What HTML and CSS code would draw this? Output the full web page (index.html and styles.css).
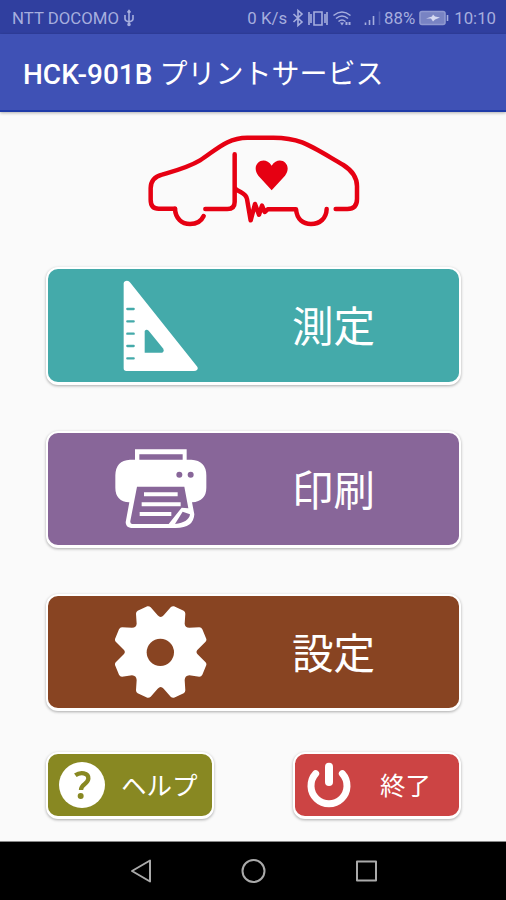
FILE: index.html
```html
<!DOCTYPE html>
<html lang="ja">
<head>
  <meta charset="UTF-8" />
  <meta name="viewport" content="width=device-width, initial-scale=1.0" />
  <title>HCK-901B プリントサービス</title>
  <link rel="stylesheet" href="styles.css">
</head>
<body>
  <div class="status-bar">
    <span class="carrier">NTT DOCOMO</span>
    <svg class="usb" viewBox="0 0 12 18" width="12" height="18">
      <path d="M6 2v14M2 6v4q0 2 4 3M10 6v4q0 2-4 3M4.500 3.500L6 1.500l1.500 2" />
      <circle cx="6" cy="15.500" r="1" />
    </svg>
    <span class="speed">0 K/s</span>
    <svg class="status-icons" viewBox="0 0 91 20" width="91" height="20">
      <path d="M1.500 6l8.500 8-4 3.500V2.500l4 3.500-8.500 8" />
      <path d="M22 4h8v13h-8zM19 6v9M33 6v9M17 4v13M35 4v13" />
      <path d="M41.500 7.500q8.500-7 17 0M44 10.500q6-5 12 0M46.500 13.500q3.500-3 7 0" />
      <path class="solid" d="M48 14.500l2 3 2-3zM53.500 14h2v3h-2zM56.500 14h2v3h-2z" />
      <path d="M73.500 14.500v2.500M77.500 12V17M81.500 8v9" />
      <path class="dim" d="M87.500 3.500V17" />
    </svg>
    <span class="percent">88%</span>
    <svg class="battery" viewBox="0 0 30 16" width="30" height="16">
      <rect class="cell" x="1" y="1.500" width="25" height="13" rx="2" />
      <path d="M28.500 5v6" />
      <path class="bolt" d="M7 8.500l6-2 1-2 2 2 5 1-5 2-2 2-2-3z" />
    </svg>
    <span class="clock">10:10</span>
  </div>

  <header class="toolbar">
    <h1><span class="model">HCK-901B</span>プリントサービス</h1>
  </header>

  <main>
    <!-- Car logo -->
    <svg class="logo" viewBox="0 0 690 330" width="230" height="110">
      <path d="M105 251H56Q32 251 32 224V190Q32 158 66 149C110 136 145 127 180 106C226 77 260 38 322 38H400C482 38 510 62 610 120Q651 146 651 184V222Q651 252 622 252H587" />
      <path d="M105 251C106 281 126 297 150 297Q180 297 191 273" />
      <path d="M196 252H262Q284 252 284 231V88" />
      <path d="M286 191C302 204 318 204 321 222L332 286L345 237L357 269L366 242L374 261L383 253H468C471 284 490 297 513 297C540 297 559 280 560 252" />
      <path class="heart" d="M395 196L355 152C329 117 373 88 395 122C417 88 461 117 435 152Z" />
    </svg>

    <div class="menu">
      <button class="btn measure">
        <svg viewBox="225 60 276 276" width="92" height="92">
          <path class="fill" d="M251 70Q252 62 261 62Q267 62 271 68L470 318Q476 325 471 330Q468 333 462 333H259Q251 333 251 325Z" />
          <path class="hole" d="M314 213Q319 206 326 212L370 266Q374 272 367 278H314Z" />
          <path class="ticks" d="M262 147h19M262 184h19M262 221h19M262 258h19M262 295h19" />
        </svg>
        <span>測定</span>
      </button>

      <button class="btn print">
        <svg viewBox="225 54 276 276" width="92" height="92">
          <path class="fill" d="M285 73H440V104H454Q499 107 499 151V188Q499 228 456 232L463 268Q461 309 407 309H273Q257 307 257 292L268 232Q226 229 226 188V151Q227 106 270 104H285Z" />
          <path class="hole" d="M298 88H428V104H298ZM291 185H433L445 250L425 248L386 297H276Q270 296 271 288Z" />
          <path class="hole" d="M428 260L450 268Q447 292 405 297Z" />
          <circle class="hole" cx="418" cy="149" r="9" />
          <circle class="hole" cx="452" cy="149" r="9" />
          <path class="lines" d="M312 208H413M305 238H422M299 267H394" />
        </svg>
        <span>印刷</span>
      </button>

      <button class="btn setup">
        <svg viewBox="225 48 276 276" width="92" height="92">
          <path class="fill" d="M402 49L431 62Q436 65 436 71L434 101Q435 113 448 113L478 112Q484 112 487 118L499 147Q500 152 496 156L472 180Q467 186 472 192L496 216Q500 220 499 225L487 254Q484 260 478 260L448 256Q435 257 434 270L436 301Q436 307 431 310L402 323Q396 324 392 320L371 296Q362 286 353 296L332 320Q328 324 322 323L293 310Q288 307 288 301L290 270Q289 257 276 256L246 260Q240 260 237 254L225 225Q224 220 228 216L252 192Q257 186 252 180L228 156Q224 152 225 147L237 118Q240 112 246 112L276 113Q289 113 290 101L288 71Q288 65 293 62L322 49Q328 48 332 52L353 76Q362 86 371 76L392 52Q396 48 402 49Z" />
          <circle class="hole" cx="361" cy="187" r="41" />
        </svg>
        <span>設定</span>
      </button>

      <div class="row">
        <button class="btn small help">
          <svg viewBox="0 0 138 138" width="46" height="46">
            <circle class="fill" cx="69" cy="69" r="69" />
            <path class="mark" d="M49 40C64 29 89 32 88 50C87 67 66 65 66 84" />
            <circle class="hole" cx="65" cy="102" r="9" />
          </svg>
          <span>ヘルプ</span>
        </button>
        <button class="btn small exit">
          <svg viewBox="0 0 138 138" width="46" height="46">
            <path class="power" d="M29 35A54 54 0 1 0 109 35" />
            <path class="power stem" d="M69 14V60" />
          </svg>
          <span>終了</span>
        </button>
      </div>
    </div>
  </main>

  <nav class="nav-bar">
    <svg viewBox="0 0 24 26" width="24" height="26"><path d="M21 2.500V23.500L3 13Z" /></svg>
    <svg viewBox="0 0 26 26" width="26" height="26"><circle cx="13.500" cy="13" r="11" /></svg>
    <svg viewBox="0 0 24 26" width="24" height="26"><rect x="4" y="3.500" width="19" height="19" /></svg>
  </nav>
</body>
</html>
```

FILE: styles.css
```css
:root {
  --primary: #3f51b5;
  --primary-dark: #303f9f;
  --status-text: #a6aede;
  --page: #fafafa;
  --logo: #e60012;
}
* { box-sizing: border-box; }
html, body {
  margin: 0; padding: 0;
}
body {
  height: 900px;
  display: flex;
  flex-direction: column;
  background: var(--page);
  font-family: Roboto, "Noto Sans CJK JP", sans-serif;
  overflow: hidden;
}
svg { display: block; flex: none; }

/* Status bar */
.status-bar {
  height: 34px;
  display: flex;
  align-items: center;
  padding: 2px 10px 0 12px;
  background: var(--primary-dark);
  color: var(--status-text);
  font-size: 16.8px;
  line-height: 20px;
  white-space: nowrap;
}
.status-bar svg {
  fill: none;
  stroke: var(--status-text);
  stroke-width: 1.6;
}
.status-bar .solid { fill: var(--status-text); stroke: none; }
.status-bar .dim { opacity: 0.3; }
.status-bar .cell { fill: #7883c3; stroke: #8f99d0; }
.status-bar .bolt { fill: #d5d9f2; stroke: none; }
.usb { margin-left: 4px; }
.speed { margin-left: auto; }
.status-icons { margin-left: 5px; }
.percent { margin-left: 1px; }
.battery { margin: 0 5px 0 4px; }

/* Toolbar */
.toolbar {
  height: 78px;
  display: flex;
  align-items: center;
  padding: 5px 24px 0 23px;
  background: var(--primary);
  border-bottom: 2px solid #1f3ba8;
  box-shadow: 0 1px 3px rgba(0,0,0,0.3);
}
h1 {
  margin: 0;
  color: #fff;
  font-size: 28px;
  font-weight: 400;
  line-height: 36px;
  white-space: nowrap;
}
.model {
  margin-right: 7px;
  font-weight: 500;
}

main { flex: 1; }

/* Logo */
.logo {
  margin: 13px 0 0 140px;
  fill: none;
  stroke: var(--logo);
  stroke-width: 13.5;
  stroke-linecap: round;
  stroke-linejoin: round;
}
.logo .heart { fill: var(--logo); stroke: none; }

/* Buttons */
.menu {
  width: 415px;
  margin: 32px 0 0 46px;
}
.btn {
  width: 100%;
  height: 117px;
  display: flex;
  align-items: center;
  margin: 0 0 47px;
  padding: 0 0 0 67px;
  border: 2px solid #fff;
  border-bottom-width: 3px;
  border-radius: 12px;
  background: var(--color);
  color: #fff;
  font: 400 41.5px/60px "Noto Sans CJK JP", sans-serif;
  box-shadow: 0 1px 3px rgba(0,0,0,0.32);
}
.btn span {
  margin-left: 85px;
  padding-bottom: 3px;
  white-space: nowrap;
}
.measure { --color: #44aaaa; height: 118px; margin-bottom: 46px; }
.print { --color: #886699; margin-bottom: 46px; }
.setup { --color: #884422; margin-bottom: 41px; }
.help { --color: #888822; }
.exit { --color: #cc4444; }

.fill { fill: #fff; }
.hole { fill: var(--color); }
.ticks, .lines, .mark, .power {
  fill: none;
  stroke: #fff;
  stroke-linecap: round;
}
.ticks { stroke: var(--color); stroke-width: 7; }
.lines { stroke-width: 12; stroke-linecap: butt; }
.mark { stroke: var(--color); stroke-width: 13; stroke-linecap: butt; }
.power { stroke-width: 21; }
.stem { stroke-width: 24; }

.row {
  display: flex;
  justify-content: space-between;
}
.btn.small {
  width: 168px;
  height: 67px;
  margin: 0;
  padding-left: 11px;
  font-size: 25.5px;
  line-height: 38px;
}
.help span { margin-left: 16px; }
.exit span { margin-left: 28px; }

/* Navigation bar */
.nav-bar {
  height: 59px;
  display: flex;
  align-items: center;
  justify-content: center;
  gap: 87px;
  background: #000;
  border-top: 1px solid #888;
}
.nav-bar svg {
  fill: none;
  stroke: #aaa;
  stroke-width: 2;
  stroke-linejoin: round;
}
```
